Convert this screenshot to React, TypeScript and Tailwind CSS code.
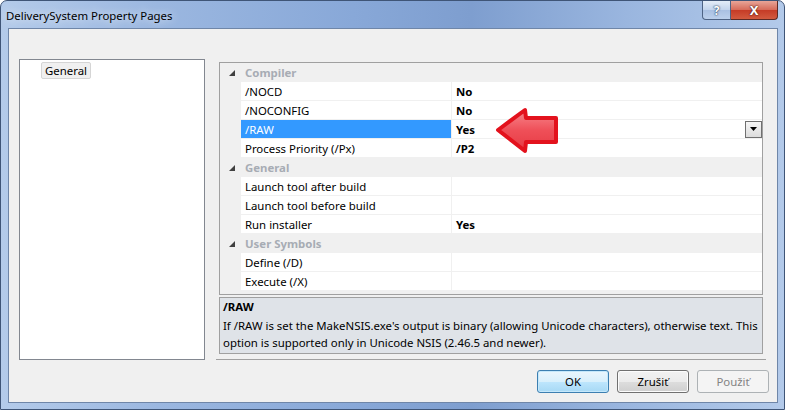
import React from 'react';

type Row =
  | { kind: 'cat'; label: string }
  | { kind: 'prop'; label: string; value?: string; selected?: boolean };

const rows: Row[] = [
  { kind: 'cat', label: 'Compiler' },
  { kind: 'prop', label: '/NOCD', value: 'No' },
  { kind: 'prop', label: '/NOCONFIG', value: 'No' },
  { kind: 'prop', label: '/RAW', value: 'Yes', selected: true },
  { kind: 'prop', label: 'Process Priority (/Px)', value: '/P2' },
  { kind: 'cat', label: 'General' },
  { kind: 'prop', label: 'Launch tool after build' },
  { kind: 'prop', label: 'Launch tool before build' },
  { kind: 'prop', label: 'Run installer', value: 'Yes' },
  { kind: 'cat', label: 'User Symbols' },
  { kind: 'prop', label: 'Define (/D)' },
  { kind: 'prop', label: 'Execute (/X)' },
];

// expanded-category marker
function Expander() {
  return (
    <svg width="6" height="6" viewBox="0 0 6 6" className="ml-[9px]">
      <polygon points="6,0 6,6 0,6" fill="#404040" />
    </svg>
  );
}

function GridRow({ row }: { row: Row }) {
  if (row.kind === 'cat') {
    return (
      <div className="flex h-[19px] items-center bg-[#f0f0f0]">
        <div className="flex w-[21px] items-center">
          <Expander />
        </div>
        <span className="pl-[4px] font-bold text-[#a7acb4]">{row.label}</span>
      </div>
    );
  }
  return (
    <div className="flex h-[19px]">
      <div className="w-[21px] bg-[#f0f0f0]" />
      <div
        className={
          row.selected
            ? 'flex w-[211px] items-center border-b border-r border-[#f0f0f0] bg-[#3399ff] pl-[4px] text-white'
            : 'flex w-[211px] items-center border-b border-r border-[#f0f0f0] bg-white pl-[4px] text-black'
        }
      >
        {row.label}
      </div>
      <div className="flex flex-1 items-center border-b border-[#f0f0f0] bg-white pl-[4px] font-bold text-black">
        <span>{row.value}</span>
        {row.selected && (
          <div className="ml-auto flex h-[17px] w-[17px] items-center justify-center border border-[#707070] bg-[linear-gradient(#f6f6f6,#dcdcdc)]">
            <svg width="7" height="4" viewBox="0 0 7 4">
              <polygon points="0,0 7,0 3.5,4" fill="#000" />
            </svg>
          </div>
        )}
      </div>
    </div>
  );
}

function RedArrow() {
  return (
    <svg width="68" height="48" viewBox="0 0 68 48" className="absolute left-[492px] top-[106px]">
      <defs>
        <linearGradient id="arrowFill" x1="0" y1="0" x2="0" y2="1">
          <stop offset="0" stopColor="#f7878d" />
          <stop offset="0.5" stopColor="#ef4f58" />
          <stop offset="1" stopColor="#e63a43" />
        </linearGradient>
      </defs>
      <polygon
        points="5,23 32,3 33,11 63,11 63,35 33,35 32,44"
        fill="url(#arrowFill)"
        stroke="#e3121d"
        strokeWidth="4"
        strokeLinejoin="round"
      />
    </svg>
  );
}

export default function App() {
  return (
    <div
      className="relative h-[410px] w-[785px] overflow-hidden rounded-t-[7px] border border-[#3f5577] bg-[linear-gradient(90deg,#b4cbea,#9bb7e0_20%,#88a8d8_45%,#7e9ecf_60%,#9ab6df_80%,#b3caea)] text-[11.4px] leading-[17px] text-black"
      style={{ fontFamily: '"Segoe UI", "Noto Sans", sans-serif' }}
    >
      {/* title bar */}
      <div className="flex h-[27px] items-start justify-between">
        <span className="pl-[5px] pt-[6px] text-black [text-shadow:0_0_8px_#ffffff]">
          DeliverySystem Property Pages
        </span>
        <div className="mr-[6px] flex">
          <div className="flex h-[19px] w-[29px] items-center justify-center rounded-bl-[4px] border border-t-0 border-[#4e6384] bg-[linear-gradient(#e4edf8,#c3d4ec_50%,#a9c0e2_51%,#bcd0ec)] text-[12px] font-bold text-white [text-shadow:0_0_1px_#233a5a,0_0_2px_#233a5a]">
            ?
          </div>
          <div className="flex h-[19px] w-[47px] items-center justify-center rounded-br-[4px] border border-l-0 border-t-0 border-[#5c2a25] bg-[linear-gradient(#e8a598,#d66a58_50%,#c53b26_51%,#d25a3f)] text-[13px] font-bold text-white [text-shadow:0_0_1px_#4a1510,0_0_2px_#4a1510]">
            X
          </div>
        </div>
      </div>

      {/* client area */}
      <div className="ml-[7px] h-[375px] w-[770px] border border-[#6f86a8] bg-[#f0f0f0]">
        <div className="flex pl-[10px] pt-[30px]">
          {/* page tree */}
          <div className="h-[301px] w-[186px] border border-[#828790] bg-white">
            <div className="ml-[21px] mt-[2px] inline-flex h-[17px] items-center rounded-[2px] border border-[#d5d5d5] bg-[#f0f0f0] px-[3px]">
              General
            </div>
          </div>

          {/* property grid + description */}
          <div className="ml-[14px] mt-[3px] flex w-[544px] flex-col">
            <div className="h-[233px] border border-[#a0a0a0] bg-[#f0f0f0]">
              {rows.map((r, i) => (
                <GridRow key={i} row={r} />
              ))}
            </div>
            <div className="mt-[2px] h-[57px] border border-[#a0a0a0] bg-[#dfe3e8] pl-[3px]">
              <div className="font-bold">/RAW</div>
              <div className="mt-[2px] whitespace-nowrap">
                If /RAW is set the MakeNSIS.exe's output is binary (allowing Unicode characters), otherwise text. This
                <br />
                option is supported only in Unicode NSIS (2.46.5 and newer).
              </div>
            </div>
            <div className="-mx-[3px] mt-[5px] h-[1px] bg-[#a0a0a0]" />
          </div>
        </div>

        {/* dialog buttons */}
        <div className="mt-[10px] flex justify-end gap-[8px] pr-[8px]">
          <button className="h-[23px] w-[72px] rounded-[3px] border border-[#3c7fb1] bg-[linear-gradient(#eaf6fd,#d9f0fc_50%,#bee6fd_51%,#a7d9f5)] text-black shadow-[inset_0_0_0_1px_#c5e8fb]">
            OK
          </button>
          <button className="h-[23px] w-[72px] rounded-[3px] border border-[#707070] bg-[linear-gradient(#f2f2f2,#ebebeb_50%,#dddddd_51%,#cfcfcf)] text-black shadow-[inset_0_0_0_1px_#fcfcfc]">
            Zrušiť
          </button>
          <button className="h-[23px] w-[72px] rounded-[3px] border border-[#adb2b5] bg-[#f4f4f4] text-[#838383]">
            Použiť
          </button>
        </div>
      </div>

      <RedArrow />
    </div>
  );
}
